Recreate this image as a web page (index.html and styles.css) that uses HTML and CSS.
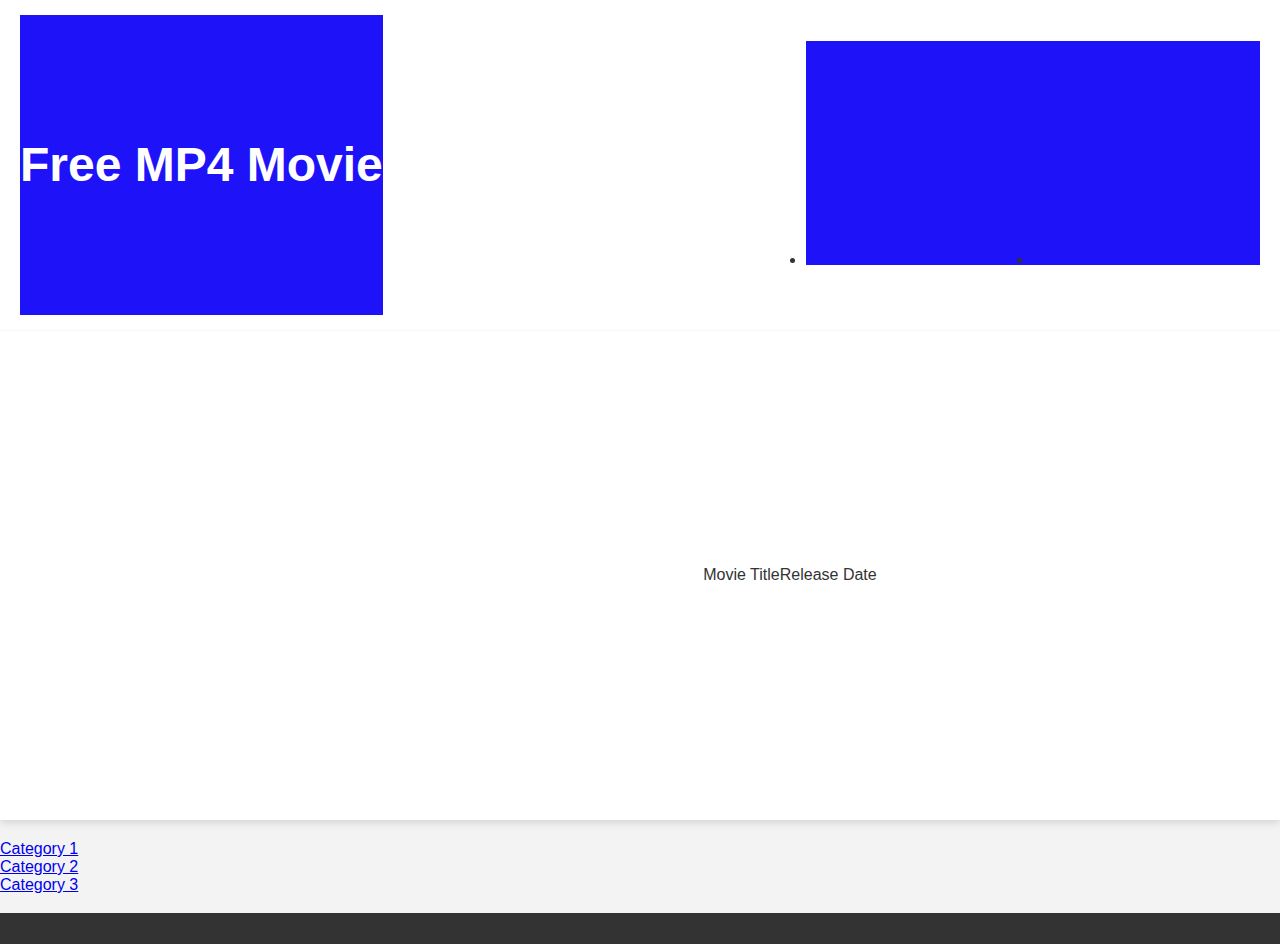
FILE: index.html
```html
<!DOCTYPE html>
<html lang="en">
<head>
<meta charset="utf-8">
<title>Free MP4 Movie</title>
<link rel="stylesheet" href="styles.css">
</head>
<body>
<header class="site-header">
  <h1 class="logo">Free MP4 Movie</h1>
  <nav class="top-nav">
    <ul class="top-menu">
      <li class="top-item"><a class="top-link" href="#"></a></li>
      <li class="top-item"><a class="top-link" href="#"></a></li>
    </ul>
  </nav>
</header>
<main class="main">
  <aside class="sidebar"></aside>
  <section class="content">
    <div class="movie"><span class="movie-title">Movie Title</span><span class="movie-date">Release Date</span></div>
  </section>
</main>
<nav class="categories">
  <ul class="cat-list">
    <li><a href="#">Category 1</a></li>
    <li><a href="#">Category 2</a></li>
    <li><a href="#">Category 3</a></li>
  </ul>
</nav>
<footer class="site-footer"></footer>
</body>
</html>
```
FILE: styles.css
```css
html, body {
  margin: 0;
  padding: 0;
}
body {
  font-family: "Liberation Sans", Arial, sans-serif;
  font-size: 16px;
  color: #333;
  background: #f3f3f3;
}
.site-header {
  display: flex;
  justify-content: space-between;
  align-items: flex-start;
  padding: 15px 20px;
  background: #fff;
  box-shadow: 0 1px 1px rgba(0, 0, 0, 0.03);
  position: relative;
  z-index: 2;
}
.logo {
  margin: 0;
  height: 300px;
  line-height: 300px;
  background: #1e12f8;
  color: #fff;
  font-size: 48px;
  font-weight: bold;
  white-space: nowrap;
}
.top-nav {
  margin-top: 26px;
}
.top-menu {
  display: flex;
  margin: 0;
  padding: 0;
  background: #1e12f8;
  width: 454px;
}
.top-item {
  width: 227px;
  line-height: 0;
  list-style: disc outside;
}
.top-link {
  display: inline-block;
  height: 224px;
}
.main {
  display: flex;
  height: 490px;
  background: #fff;
  box-shadow: 0 2px 8px rgba(0, 0, 0, 0.15);
  position: relative;
  z-index: 1;
}
.sidebar {
  width: 300px;
  flex: none;
}
.content {
  flex: 1;
  display: flex;
  align-items: center;
  justify-content: center;
}
.categories {
  padding: 20px 0 19px;
}
.cat-list {
  list-style: none;
  margin: 0;
  padding: 0;
}
.cat-list a {
  color: #0000ee;
}
.site-footer {
  height: 32px;
  background: #333;
}
```
